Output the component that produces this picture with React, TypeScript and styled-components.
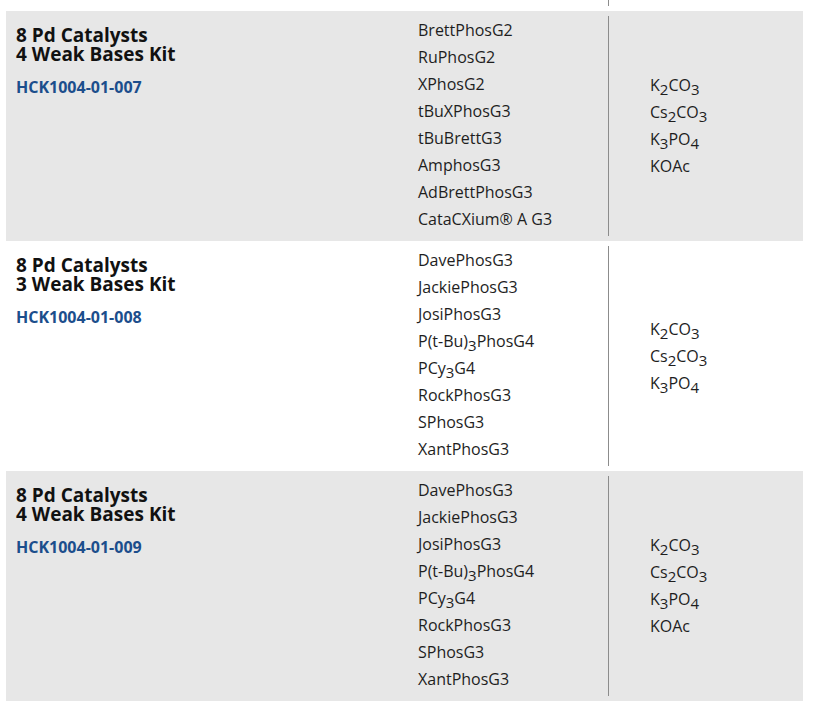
import React from "react";
import styled, { createGlobalStyle } from "styled-components";

const GlobalStyle = createGlobalStyle`
  html, body {
    margin: 0;
    padding: 0;
    background: #ffffff;
  }
  body {
    font-family: "Open Sans", "Noto Sans", sans-serif;
    color: #1a1a1a;
  }
`;

const Table = styled.div`
  display: flex;
  flex-direction: column;
  margin: 0 14px 0 6px;
`;

const Row = styled.div<{ $shaded: boolean }>`
  display: grid;
  grid-template-columns: 402px 201px 1fr;
  padding: 5px 0;
  background: ${(p) => (p.$shaded ? "#e7e7e7" : "#ffffff")};
`;

const TailRow = styled.div`
  display: grid;
  grid-template-columns: 402px 201px 1fr;
  height: 11px;
`;

const TailDivider = styled.div`
  grid-column: 2;
  height: 6px;
  border-right: 1px solid #8c8c8c;
`;

const KitCell = styled.div`
  padding: 10px 10px 8px;
`;

const KitTitle = styled.h3`
  margin: 0;
  font-size: 19px;
  line-height: 19px;
  font-weight: 700;
  color: #111111;
`;

const KitCode = styled.div`
  margin-top: 12px;
  font-size: 16px;
  line-height: 22px;
  font-weight: 700;
  color: #1c4e8c;
`;

const CatalystList = styled.ul`
  list-style: none;
  margin: 0;
  padding: 1px 0 3px 10px;
  border-right: 1px solid #8c8c8c;
`;

const BaseList = styled.ul`
  list-style: none;
  margin: 0;
  padding: 0 0 0 41px;
  align-self: center;
`;

const Item = styled.li`
  font-size: 16px;
  line-height: 27px;
  color: #1e1e1e;
  white-space: nowrap;
`;

const Sub = styled.sub`
  font-size: 15px;
  line-height: 0;
  vertical-align: -4px;
`;

type Part = string | { sub: string };

const f = (s: string): Part[] => {
  const parts: Part[] = [];
  s.split(/(_\d)/).forEach((seg) => {
    if (!seg) return;
    if (seg.startsWith("_")) parts.push({ sub: seg.slice(1) });
    else parts.push(seg);
  });
  return parts;
};

const Formula = ({ text }: { text: string }) => (
  <>
    {f(text).map((p, i) =>
      typeof p === "string" ? <span key={i}>{p}</span> : <Sub key={i}>{p.sub}</Sub>
    )}
  </>
);

type Kit = {
  title: [string, string];
  code: string;
  catalysts: string[];
  bases: string[];
};

const g3Set = [
  "DavePhosG3",
  "JackiePhosG3",
  "JosiPhosG3",
  "P(t-Bu)_3PhosG4",
  "PCy_3G4",
  "RockPhosG3",
  "SPhosG3",
  "XantPhosG3",
];

const kits: Kit[] = [
  {
    title: ["8 Pd Catalysts", "4 Weak Bases Kit"],
    code: "HCK1004-01-007",
    catalysts: [
      "BrettPhosG2",
      "RuPhosG2",
      "XPhosG2",
      "tBuXPhosG3",
      "tBuBrettG3",
      "AmphosG3",
      "AdBrettPhosG3",
      "CataCXium® A G3",
    ],
    bases: ["K_2CO_3", "Cs_2CO_3", "K_3PO_4", "KOAc"],
  },
  {
    title: ["8 Pd Catalysts", "3 Weak Bases Kit"],
    code: "HCK1004-01-008",
    catalysts: g3Set,
    bases: ["K_2CO_3", "Cs_2CO_3", "K_3PO_4"],
  },
  {
    title: ["8 Pd Catalysts", "4 Weak Bases Kit"],
    code: "HCK1004-01-009",
    catalysts: g3Set,
    bases: ["K_2CO_3", "Cs_2CO_3", "K_3PO_4", "KOAc"],
  },
];

export default function App() {
  return (
    <>
      <GlobalStyle />
      <Table>
        <TailRow>
          <TailDivider />
        </TailRow>
        {kits.map((kit, i) => (
          <Row key={kit.code} $shaded={i % 2 === 0}>
            <KitCell>
              <KitTitle>
                {kit.title[0]}
                <br />
                {kit.title[1]}
              </KitTitle>
              <KitCode>{kit.code}</KitCode>
            </KitCell>
            <CatalystList>
              {kit.catalysts.map((c) => (
                <Item key={c}>
                  <Formula text={c} />
                </Item>
              ))}
            </CatalystList>
            <BaseList>
              {kit.bases.map((b) => (
                <Item key={b}>
                  <Formula text={b} />
                </Item>
              ))}
            </BaseList>
          </Row>
        ))}
      </Table>
    </>
  );
}
